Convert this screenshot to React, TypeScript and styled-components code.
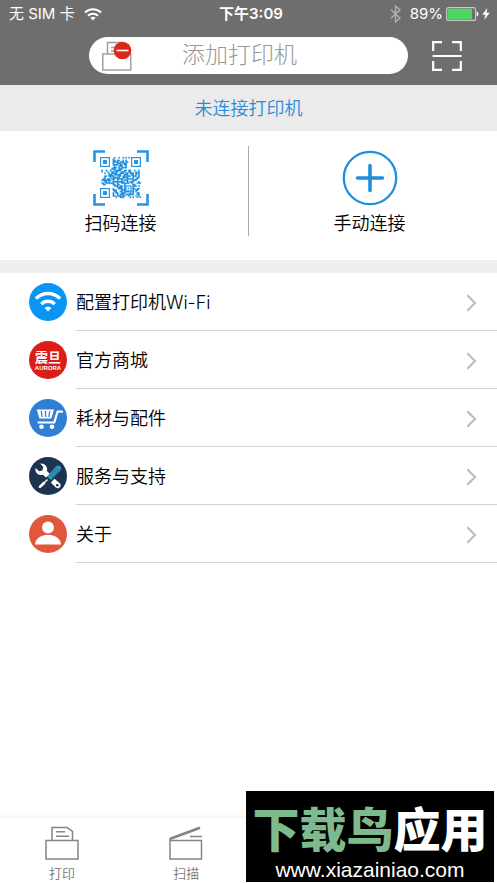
import React from "react";
import styled, { createGlobalStyle } from "styled-components";

const GlobalStyle = createGlobalStyle`
  *, *::before, *::after { box-sizing: border-box; }
  body {
    margin: 0;
    background: #fff;
    color: #000;
    font-family: Inter, "Noto Sans CJK SC", sans-serif;
    font-weight: 350;
  }
  button, a {
    margin: 0;
    padding: 0;
    border: 0;
    background: none;
    color: inherit;
    font: inherit;
    text-decoration: none;
    cursor: pointer;
  }
  svg { display: block; flex: none; }
`;

const Screen = styled.div`
  position: relative;
  display: flex;
  flex-direction: column;
  min-height: 100vh;
`;

const Header = styled.header`
  background: #6e6e6e;
  color: #fff;
`;

const StatusBar = styled.div`
  display: grid;
  grid-template-columns: 1fr auto 1fr;
  align-items: center;
  height: 28px;
  padding: 0 7px 0 9px;
  font-size: 15px;
  font-weight: 400;
  line-height: 20px;
`;

const StatusGroup = styled.div<{ $end?: boolean; $gap: number }>`
  display: flex;
  align-items: center;
  justify-content: ${(p) => (p.$end ? "flex-end" : "flex-start")};
  gap: ${(p) => p.$gap}px;
  white-space: nowrap;
`;

const Clock = styled.time`
  padding-left: 3px;
  font-weight: 600;
`;

const SearchRow = styled.div`
  display: flex;
  align-items: center;
  gap: 24px;
  padding: 9px 35px 11px 89px;
`;

const AddPrinter = styled.button`
  display: grid;
  grid-template-columns: 30px 1fr 30px;
  align-items: center;
  flex: 1;
  height: 37px;
  padding: 0 31px 0 13px;
  border-radius: 19px;
  background: #fff;
  color: #999;
  font-size: 23px;
  font-weight: 300;
  line-height: 37px;
`;

const Notice = styled.p`
  margin: 0;
  padding: 10px 0 8px;
  background: #ebebeb;
  color: #2b8ad6;
  font-size: 18px;
  line-height: 28px;
  text-align: center;
`;

const ConnectPanel = styled.section`
  display: grid;
  grid-template-columns: 1fr 1px 1fr;
  padding: 15px 0 24px;
  border-bottom: 13px solid #efefef;
`;

const Divider = styled.span`
  background: #aaa;
`;

const ConnectButton = styled.button`
  display: flex;
  flex-direction: column;
  align-items: center;
  gap: 4px;
  height: 90px;
  padding: 4px 7px 0 0;
  font-size: 18px;
  line-height: 28px;
`;

const Menu = styled.nav`
  display: flex;
  flex-direction: column;
  flex: 1;
`;

const MenuLink = styled.a`
  display: flex;
  align-items: center;
  gap: 9px;
  padding-left: 29px;
`;

const MenuBody = styled.span`
  display: flex;
  flex: 1;
  align-items: center;
  justify-content: space-between;
  height: 58px;
  padding: 2px 20px 0 0;
  border-bottom: 1px solid #d4d4d4;
  font-size: 18px;
  line-height: 28px;
`;

const TabBar = styled.nav`
  display: grid;
  grid-template-columns: repeat(4, 1fr);
  height: 66px;
  padding-top: 8px;
  border-top: 1px solid #f6f6f6;
  box-shadow: 0 -1px 3px #f3f3f3;
`;

const Tab = styled.a`
  display: flex;
  flex-direction: column;
  align-items: center;
  gap: 3px;
  color: #777;
  font-size: 13px;
  line-height: 20px;
`;

const Banner = styled.aside`
  position: absolute;
  right: 3px;
  bottom: 1px;
  display: flex;
  flex-direction: column;
  align-items: center;
  gap: 4px;
  width: 248px;
  height: 91px;
  padding-top: 15px;
  background: #000;
  color: #fff;
`;

const BannerTitle = styled.strong`
  font-size: 47px;
  font-style: oblique 8deg;
  font-weight: 900;
  line-height: 48px;
  white-space: nowrap;
`;

const BannerAccent = styled.span`
  color: #7dbb8e;
`;

const BannerUrl = styled.span`
  font-family: "Liberation Sans", sans-serif;
  font-size: 21px;
  font-weight: 400;
  line-height: 24px;
`;

const WifiStatusIcon = () => (
  <svg width="18" height="13" viewBox="0 0 18 13" fill="none" stroke="#fff" strokeWidth="2.1">
    <path d="M1 4.6C5.4.2 12.6.2 17 4.6" />
    <path d="M4 7.7C6.8 5 11.2 5 14 7.7" />
    <path d="M9 12.6 6.3 9.8C7.9 8.5 10.1 8.5 11.7 9.8Z" fill="#fff" stroke="none" />
  </svg>
);

const BluetoothIcon = () => (
  <svg width="17" height="18" viewBox="0 0 17 18" fill="none" stroke="#b0b0b0" strokeWidth="1.4">
    <path d="M1 4.8 10 13 5.5 17V1L10 5 1 13.2" />
  </svg>
);

const BatteryIcon = () => (
  <svg width="33" height="14" viewBox="0 0 33 14">
    <rect x=".6" y=".6" width="29" height="12.8" rx="2" fill="none" stroke="#c8c8c8" strokeWidth="1.1" />
    <rect x="1.5" y="1.7" width="24.5" height="10.6" rx="1" fill="#4bd763" />
    <path d="M30.6 4.5C33 5 33 9 30.6 9.5Z" fill="#fff" />
  </svg>
);

const BoltIcon = () => (
  <svg width="8" height="12" viewBox="0 0 8 12" fill="#fff">
    <path d="M5.3 0 .3 6.8H3.4L2.2 12 7.7 4.8H4.5Z" />
  </svg>
);

const PrinterOffIcon = () => (
  <svg width="30" height="30" viewBox="0 0 30 30" fill="none" stroke="#9a9a9a" strokeWidth="1.4">
    <path d="M5.5 13V1.5H20M9 6.5h6M9 10h6" />
    <rect x=".8" y="13" width="28" height="16" fill="#fff" />
    <circle cx="20.5" cy="9.5" r="8.8" fill="#de2519" stroke="none" />
    <path d="M14.5 9.5h12" stroke="#fff" strokeWidth="1.6" />
  </svg>
);

const ScanFrameIcon = () => (
  <svg width="30" height="30" viewBox="0 0 30 30" fill="none" stroke="#fff" strokeWidth="2.2">
    <path d="M1.2 10V1.2H10M20 1.2h8.8V10M28.8 20v8.8H20M10 28.8H1.2V20M.5 15h29" />
  </svg>
);

const QR_ROWS = [
  "00000000001001001010100000000",
  "00000000010000000000000000000",
  "00000000011011001010000000000",
  "00000000011110111011000000000",
  "00000000010011101110000000000",
  "00000000011110110110000000000",
  "00000000001001110010000000000",
  "00000000011101011110000000000",
  "00000000111001110000000000000",
  "01001001001111100110110010010",
  "01000100110110011100110001010",
  "00010010111100111011011101110",
  "00000011101111100111001101010",
  "00011011110001101101110111010",
  "00010001011111001111000100110",
  "00110110111011111001111101100",
  "01111111010010010111000111000",
  "00011010011111111001011100010",
  "01101111110010011111101000111",
  "00110000011011000100000110000",
  "00000000001110110100000111010",
  "00000000000011110100000100000",
  "00000000010001110100000110110",
  "00000000011100011100000101100",
  "00000000001100110111101101000",
  "00000000010110011100010100110",
  "00000000010010111011111100110",
  "00000000011011101100100001010",
  "00000000000100111000010100101",
];

const QrIcon = () => {
  const cell = 41 / 29;
  const modules = QR_ROWS.flatMap((row, y) =>
    [...row].map((bit, x) =>
      bit === "1" ? `M${7 + x * cell} ${7 + y * cell}h${cell}v${cell}h${-cell}z` : ""
    )
  ).join("");
  return (
    <svg width="56" height="56" viewBox="0 0 56 56" fill="#2595e2">
      <path d="M1.5 12V1.5H12M44 1.5h10.5V12M54.5 44v10.5H44M12 54.5H1.5V44" fill="none" stroke="#2595e2" strokeWidth="2.6" />
      <path d={modules} stroke="#2595e2" strokeWidth=".2" />
      {[[7, 7], [38, 7], [7, 38]].map(([x, y]) => (
        <g key={`${x}-${y}`}>
          <rect x={x + 0.6} y={y + 0.6} width="8.8" height="8.8" fill="none" stroke="#2595e2" strokeWidth="1.2" />
          <rect x={x + 3} y={y + 3} width="4" height="4" />
        </g>
      ))}
      <rect x="33" y="36" width="5" height="5" fill="#fff" stroke="#2595e2" strokeWidth="1.2" />
      <rect x="34.7" y="37.7" width="1.6" height="1.6" />
    </svg>
  );
};

const PlusIcon = () => (
  <svg width="56" height="56" viewBox="0 0 56 56" fill="none" stroke="#1f8fdc" strokeLinecap="round">
    <circle cx="28" cy="28" r="26.2" strokeWidth="2.3" />
    <path d="M28 15.5v25M15.5 28h25" strokeWidth="3.6" />
  </svg>
);

const WifiIcon = () => (
  <svg width="38" height="38" viewBox="0 0 38 38" fill="none" stroke="#fff" strokeWidth="3.4">
    <circle cx="19" cy="19" r="19" fill="#0a95f5" stroke="none" />
    <path d="M7 15.7C13.5 8.8 24.5 8.8 31 15.7" />
    <path d="M12.3 21.2C16 17.3 22 17.3 25.7 21.2" />
    <path d="M19 28.5 15.7 25C17.6 23.3 20.4 23.3 22.3 25Z" fill="#fff" stroke="none" />
  </svg>
);

const AuroraIcon = () => (
  <svg width="38" height="38" viewBox="0 0 38 38" fill="#fff" textAnchor="middle">
    <circle cx="19" cy="19" r="19" fill="#dc1c17" />
    <text x="19" y="21" fontSize="13" fontWeight="700" fontFamily="Noto Sans CJK SC">震旦</text>
    <text x="19" y="28.5" fontSize="6" fontWeight="700" fontFamily="Liberation Sans">AURORA</text>
  </svg>
);

const CartIcon = () => (
  <svg width="38" height="38" viewBox="0 0 38 38">
    <circle cx="19" cy="19" r="19" fill="#2f80d4" />
    <path d="M7.7 10.5H25L22.3 19.5H10.5Z" fill="#fff" />
    <path d="M12.2 12l1 6M16.5 12v6M20.8 12l-1 6" stroke="#2f80d4" strokeWidth="1.3" />
    <path d="M33 12.7H28.5L25.3 23.5H9.5" fill="none" stroke="#fff" strokeWidth="2.2" strokeLinecap="round" strokeLinejoin="round" />
    <circle cx="12.5" cy="27.7" r="2.3" fill="#fff" />
    <circle cx="23" cy="27.7" r="2.3" fill="#fff" />
  </svg>
);

const ToolsIcon = () => (
  <svg width="38" height="38" viewBox="0 0 38 38">
    <circle cx="19" cy="19" r="19" fill="#1e344e" />
    <path d="M11.2 6.5C15.5 6 19 9.5 18 14L21 17 17 20.5 14 17.7C9.5 19.2 5.5 15.5 6.6 11L10 14.3 13.4 13.5 14.3 10Z" fill="#fff" />
    <path d="M21.8 25.5 25.5 21.8 31 26.5C33 29 30 32.5 27 30.8Z" fill="#fff" />
    <circle cx="28.3" cy="28.2" r="1.3" fill="#1e344e" />
    <path d="M18 19.5 27 9.5Q29.5 7.5 31.5 9.5 33 11.5 31 14L22 23Z" fill="#2e9ac8" />
    <path d="M20.5 19.5 28.5 11M22.7 21 30.5 12.5" stroke="#1e344e" strokeWidth=".6" />
    <path d="M18.5 22.5 13.5 27.5" stroke="#fff" strokeWidth="1.5" />
    <path d="M14.5 24.5 16.5 26.5 11.5 31 9.5 30.7 10.5 28.5Z" fill="#fff" />
  </svg>
);

const PersonIcon = () => (
  <svg width="38" height="38" viewBox="0 0 38 38" fill="#fff">
    <circle cx="19" cy="19" r="19" fill="#e1573b" />
    <circle cx="19" cy="12.5" r="6" />
    <path d="M6 29.5C7 22.5 12 20 19 20S31 22.5 32 29.5Z" />
  </svg>
);

const Chevron = () => (
  <svg width="11" height="18" viewBox="0 0 11 18" fill="none" stroke="#bdbdbd" strokeWidth="2.2">
    <path d="M1.3 1.3 9 9 1.3 16.7" />
  </svg>
);

const PrintTabIcon = () => (
  <svg width="34" height="34" viewBox="0 0 34 34" fill="none" stroke="#858585" strokeWidth="1.5">
    <rect x="1" y="14.5" width="32" height="18.5" />
    <path d="M7 14.5V1.5H22L27.5 5.5V14.5M11 5.8h9M11 10.3h13" />
  </svg>
);

const ScanTabIcon = () => (
  <svg width="34" height="34" viewBox="0 0 34 34" fill="none" stroke="#858585" strokeWidth="1.5">
    <rect x="1" y="14.5" width="31.5" height="18.5" />
    <path d="M1.3 12.7 31 1.8" strokeWidth="2.8" />
    <path d="M1 14.5V12M21 10.5H33" />
  </svg>
);

const MENU = [
  { label: "配置打印机Wi-Fi", href: "#wifi", Icon: WifiIcon },
  { label: "官方商城", href: "#store", Icon: AuroraIcon },
  { label: "耗材与配件", href: "#supplies", Icon: CartIcon },
  { label: "服务与支持", href: "#support", Icon: ToolsIcon },
  { label: "关于", href: "#about", Icon: PersonIcon },
];

export default function App() {
  return (
    <>
      <GlobalStyle />
      <Screen>
        <Header>
          <StatusBar>
            <StatusGroup $gap={9}>
              <span>无 SIM 卡</span>
              <WifiStatusIcon />
            </StatusGroup>
            <Clock>下午3:09</Clock>
            <StatusGroup $end $gap={3}>
              <BluetoothIcon />
              <span>89%</span>
              <BatteryIcon />
              <BoltIcon />
            </StatusGroup>
          </StatusBar>
          <SearchRow>
            <AddPrinter type="button">
              <PrinterOffIcon />
              <span>添加打印机</span>
            </AddPrinter>
            <button type="button" aria-label="扫描">
              <ScanFrameIcon />
            </button>
          </SearchRow>
        </Header>
        <Notice>未连接打印机</Notice>
        <ConnectPanel>
          <ConnectButton type="button">
            <QrIcon />
            扫码连接
          </ConnectButton>
          <Divider />
          <ConnectButton type="button">
            <PlusIcon />
            手动连接
          </ConnectButton>
        </ConnectPanel>
        <Menu>
          {MENU.map(({ label, href, Icon }) => (
            <MenuLink key={href} href={href}>
              <Icon />
              <MenuBody>
                {label}
                <Chevron />
              </MenuBody>
            </MenuLink>
          ))}
        </Menu>
        <TabBar>
          <Tab href="#print">
            <PrintTabIcon />
            打印
          </Tab>
          <Tab href="#scan">
            <ScanTabIcon />
            扫描
          </Tab>
        </TabBar>
        <Banner>
          <BannerTitle>
            <BannerAccent>下载鸟</BannerAccent>应用
          </BannerTitle>
          <BannerUrl>www.xiazainiao.com</BannerUrl>
        </Banner>
      </Screen>
    </>
  );
}
